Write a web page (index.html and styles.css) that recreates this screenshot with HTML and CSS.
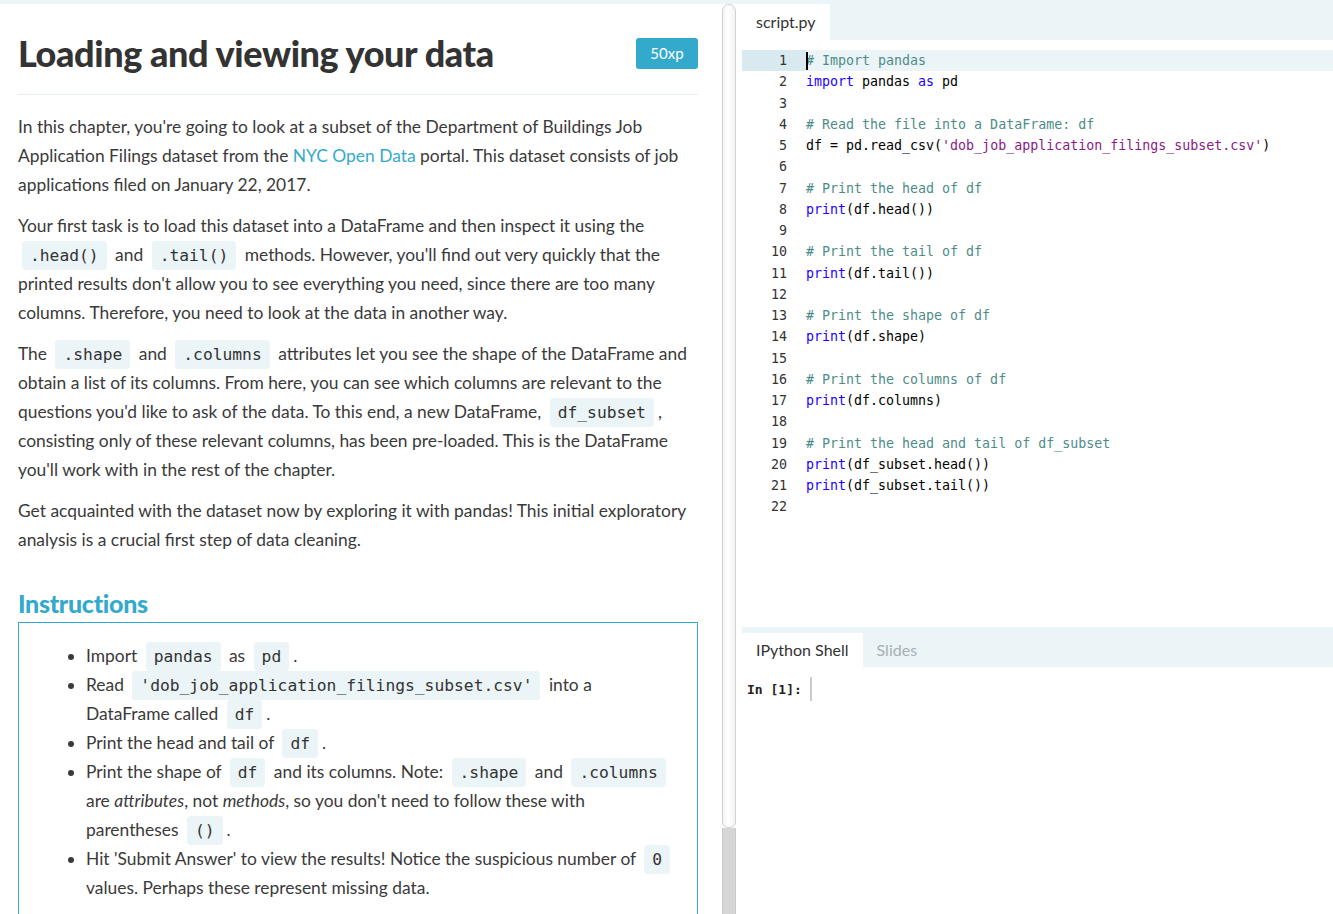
FILE: index.html
```html
<!DOCTYPE html>
<html lang="en">
<head>
<meta charset="utf-8">
<title>Loading and viewing your data</title>
<link rel="stylesheet" href="styles.css">
</head>
<body>
<div class="topstrip"></div>
<div class="app">
  <main class="lesson">
    <div class="title-row">
      <h1>Loading and viewing your data</h1>
      <span class="xp">50xp</span>
    </div>
    <hr class="rule">
    <p>In this chapter, you're going to look at a subset of the Department of Buildings Job Application Filings dataset from the <a href="#">NYC Open Data</a> portal. This dataset consists of job applications filed on January 22, 2017.</p>
    <p>Your first task is to load this dataset into a DataFrame and then inspect it using the <code>.head()</code> and <code>.tail()</code> methods. However, you'll find out very quickly that the printed results don't allow you to see everything you need, since there are too many columns. Therefore, you need to look at the data in another way.</p>
    <p>The <code>.shape</code> and <code>.columns</code> attributes let you see the shape of the DataFrame and obtain a list of its columns. From here, you can see which columns are relevant to the questions you'd like to ask of the data. To this end, a new DataFrame, <code>df_subset</code>, consisting only of these relevant columns, has been pre-loaded. This is the DataFrame you'll work with in the rest of the chapter.</p>
    <p>Get acquainted with the dataset now by exploring it with pandas! This initial exploratory analysis is a crucial first step of data cleaning.</p>
    <h2>Instructions</h2>
    <div class="instr">
      <ul>
        <li>Import <code>pandas</code> as <code>pd</code>.</li>
        <li>Read <code>'dob_job_application_filings_subset.csv'</code> into a DataFrame called <code>df</code>.</li>
        <li>Print the head and tail of <code>df</code>.</li>
        <li>Print the shape of <code>df</code> and its columns. Note: <code>.shape</code> and <code>.columns</code> are <em>attributes</em>, not <em>methods</em>, so you don't need to follow these with parentheses <code>()</code>.</li>
        <li>Hit 'Submit Answer' to view the results! Notice the suspicious number of <code>0</code> values. Perhaps these represent missing data.</li>
      </ul>
    </div>
  </main>
  <div class="scrollbar"><div class="thumb"></div><div class="track"></div></div>
  <section class="workspace">
    <div class="tabbar"><span class="tab">script.py</span></div>
    <div class="editor">
      <div class="ln active"><span class="num">1</span><span class="code"><span class="cursor"></span><span class="c"># Import pandas</span></span></div>
      <div class="ln"><span class="num">2</span><span class="code"><span class="k">import</span> pandas <span class="k">as</span> pd</span></div>
      <div class="ln"><span class="num">3</span><span class="code"></span></div>
      <div class="ln"><span class="num">4</span><span class="code"><span class="c"># Read the file into a DataFrame: df</span></span></div>
      <div class="ln"><span class="num">5</span><span class="code">df = pd.read_csv(<span class="s">'dob_job_application_filings_subset.csv'</span>)</span></div>
      <div class="ln"><span class="num">6</span><span class="code"></span></div>
      <div class="ln"><span class="num">7</span><span class="code"><span class="c"># Print the head of df</span></span></div>
      <div class="ln"><span class="num">8</span><span class="code"><span class="k">print</span>(df.head())</span></div>
      <div class="ln"><span class="num">9</span><span class="code"></span></div>
      <div class="ln"><span class="num">10</span><span class="code"><span class="c"># Print the tail of df</span></span></div>
      <div class="ln"><span class="num">11</span><span class="code"><span class="k">print</span>(df.tail())</span></div>
      <div class="ln"><span class="num">12</span><span class="code"></span></div>
      <div class="ln"><span class="num">13</span><span class="code"><span class="c"># Print the shape of df</span></span></div>
      <div class="ln"><span class="num">14</span><span class="code"><span class="k">print</span>(df.shape)</span></div>
      <div class="ln"><span class="num">15</span><span class="code"></span></div>
      <div class="ln"><span class="num">16</span><span class="code"><span class="c"># Print the columns of df</span></span></div>
      <div class="ln"><span class="num">17</span><span class="code"><span class="k">print</span>(df.columns)</span></div>
      <div class="ln"><span class="num">18</span><span class="code"></span></div>
      <div class="ln"><span class="num">19</span><span class="code"><span class="c"># Print the head and tail of df_subset</span></span></div>
      <div class="ln"><span class="num">20</span><span class="code"><span class="k">print</span>(df_subset.head())</span></div>
      <div class="ln"><span class="num">21</span><span class="code"><span class="k">print</span>(df_subset.tail())</span></div>
      <div class="ln"><span class="num">22</span><span class="code"></span></div>
    </div>
    <div class="tabbar shellbar"><span class="tab">IPython Shell</span><span class="tab off">Slides</span></div>
    <div class="shell"><span class="prompt">In [1]:</span><span class="caret"></span></div>
  </section>
</div>
</body>
</html>
```
FILE: styles.css
```css
html, body {
  margin: 0;
  padding: 0;
  height: 914px;
  overflow: hidden;
  background: #fff;
}
body {
  font-family: Lato, "Open Sans", sans-serif;
  color: #3a3a3a;
}
.topstrip {
  height: 4px;
  background: #ebf4f7;
}
.app {
  display: flex;
  height: 910px;
}
.lesson {
  width: 680px;
  padding: 0 24px 0 18px;
  flex: none;
  overflow: hidden;
}
.title-row {
  display: flex;
  align-items: center;
  justify-content: space-between;
  height: 82px;
  padding-top: 8px;
}
h1 {
  margin: 0;
  font-size: 36px;
  font-weight: 900;
  color: #333;
  letter-spacing: -0.4px;
}
.xp {
  background: #33aacc;
  color: #fff;
  font-size: 15px;
  border-radius: 3px;
  width: 62px;
  height: 31px;
  line-height: 31px;
  text-align: center;
}
.rule {
  border: 0;
  border-top: 1px solid #e6eff3;
  margin: 0 0 17px;
}
p {
  font-size: 17.4px;
  line-height: 29px;
  margin: 0 0 12px;
}
a {
  color: #33aacc;
  text-decoration: none;
}
code {
  font-family: "DejaVu Sans Mono", monospace;
  font-size: 16.3px;
  line-height: 1;
  background: #ebf4f7;
  color: #333;
  border-radius: 4px;
  padding: 5px 8px;
  margin: 0 4px;
}
h2 {
  color: #33aacc;
  font-size: 25px;
  font-weight: 900;
  margin: 34px 0 4px;
  letter-spacing: -0.3px;
}
.instr {
  border: 1px solid #33aacc;
  padding: 18px 22px 20px 20px;
  height: 400px;
}
.instr ul {
  margin: 0;
  padding-left: 47px;
  font-size: 17.4px;
  line-height: 29px;
}
.scrollbar {
  width: 14px;
  flex: none;
  display: flex;
  flex-direction: column;
}
.thumb {
  height: 824px;
  background: linear-gradient(to right, #f4f4f4, #ffffff 40%, #f2f2f2);
  border: 1px solid #d2d2d2;
  border-radius: 7px 7px 6px 6px;
  box-sizing: border-box;
}
.track {
  flex: 1;
  background: #d6d6d6;
  border-left: 1px solid #c9c9c9;
  border-right: 1px solid #c9c9c9;
}
.workspace {
  flex: 1;
  margin-left: 6px;
  display: flex;
  flex-direction: column;
  min-width: 0;
}
.tabbar {
  height: 36px;
  background: #ebf4f7;
  display: flex;
  align-items: flex-end;
  flex: none;
}
.tab {
  background: #fff;
  height: 36px;
  line-height: 36px;
  padding: 0 14px;
  font-size: 16px;
  color: #333;
}
.tab.off {
  background: transparent;
  color: #a7b0b5;
}
.editor {
  flex: none;
  height: 587px;
  padding-top: 10px;
  font-family: "DejaVu Sans Mono", monospace;
  font-size: 13.3px;
  color: #000;
  box-sizing: border-box;
}
.ln {
  display: flex;
  height: 21.25px;
  line-height: 21.25px;
}
.num {
  width: 45px;
  text-align: right;
  padding-right: 19px;
  color: #333;
  flex: none;
}
.code {
  white-space: pre;
  position: relative;
}
.ln.active {
  background: #ebf4f7;
}
.ln.active .num {
  background: #d8e9ef;
}
.cursor {
  position: absolute;
  left: 0;
  top: 2px;
  width: 2px;
  height: 18px;
  background: #000;
}
.c { color: #4e8c8a; }
.k { color: #1b00ff; }
.s { color: #8a1a86; }
.shellbar {
  height: 40px;
}
.shellbar .tab {
  height: 34px;
  line-height: 34px;
}
.shell {
  padding: 10px 5px;
  display: flex;
  align-items: center;
  font-family: "DejaVu Sans Mono", monospace;
  font-size: 13px;
  font-weight: bold;
  color: #222;
}
.caret {
  display: inline-block;
  width: 2px;
  height: 24px;
  background: #ccc;
  margin-left: 8px;
}
```
